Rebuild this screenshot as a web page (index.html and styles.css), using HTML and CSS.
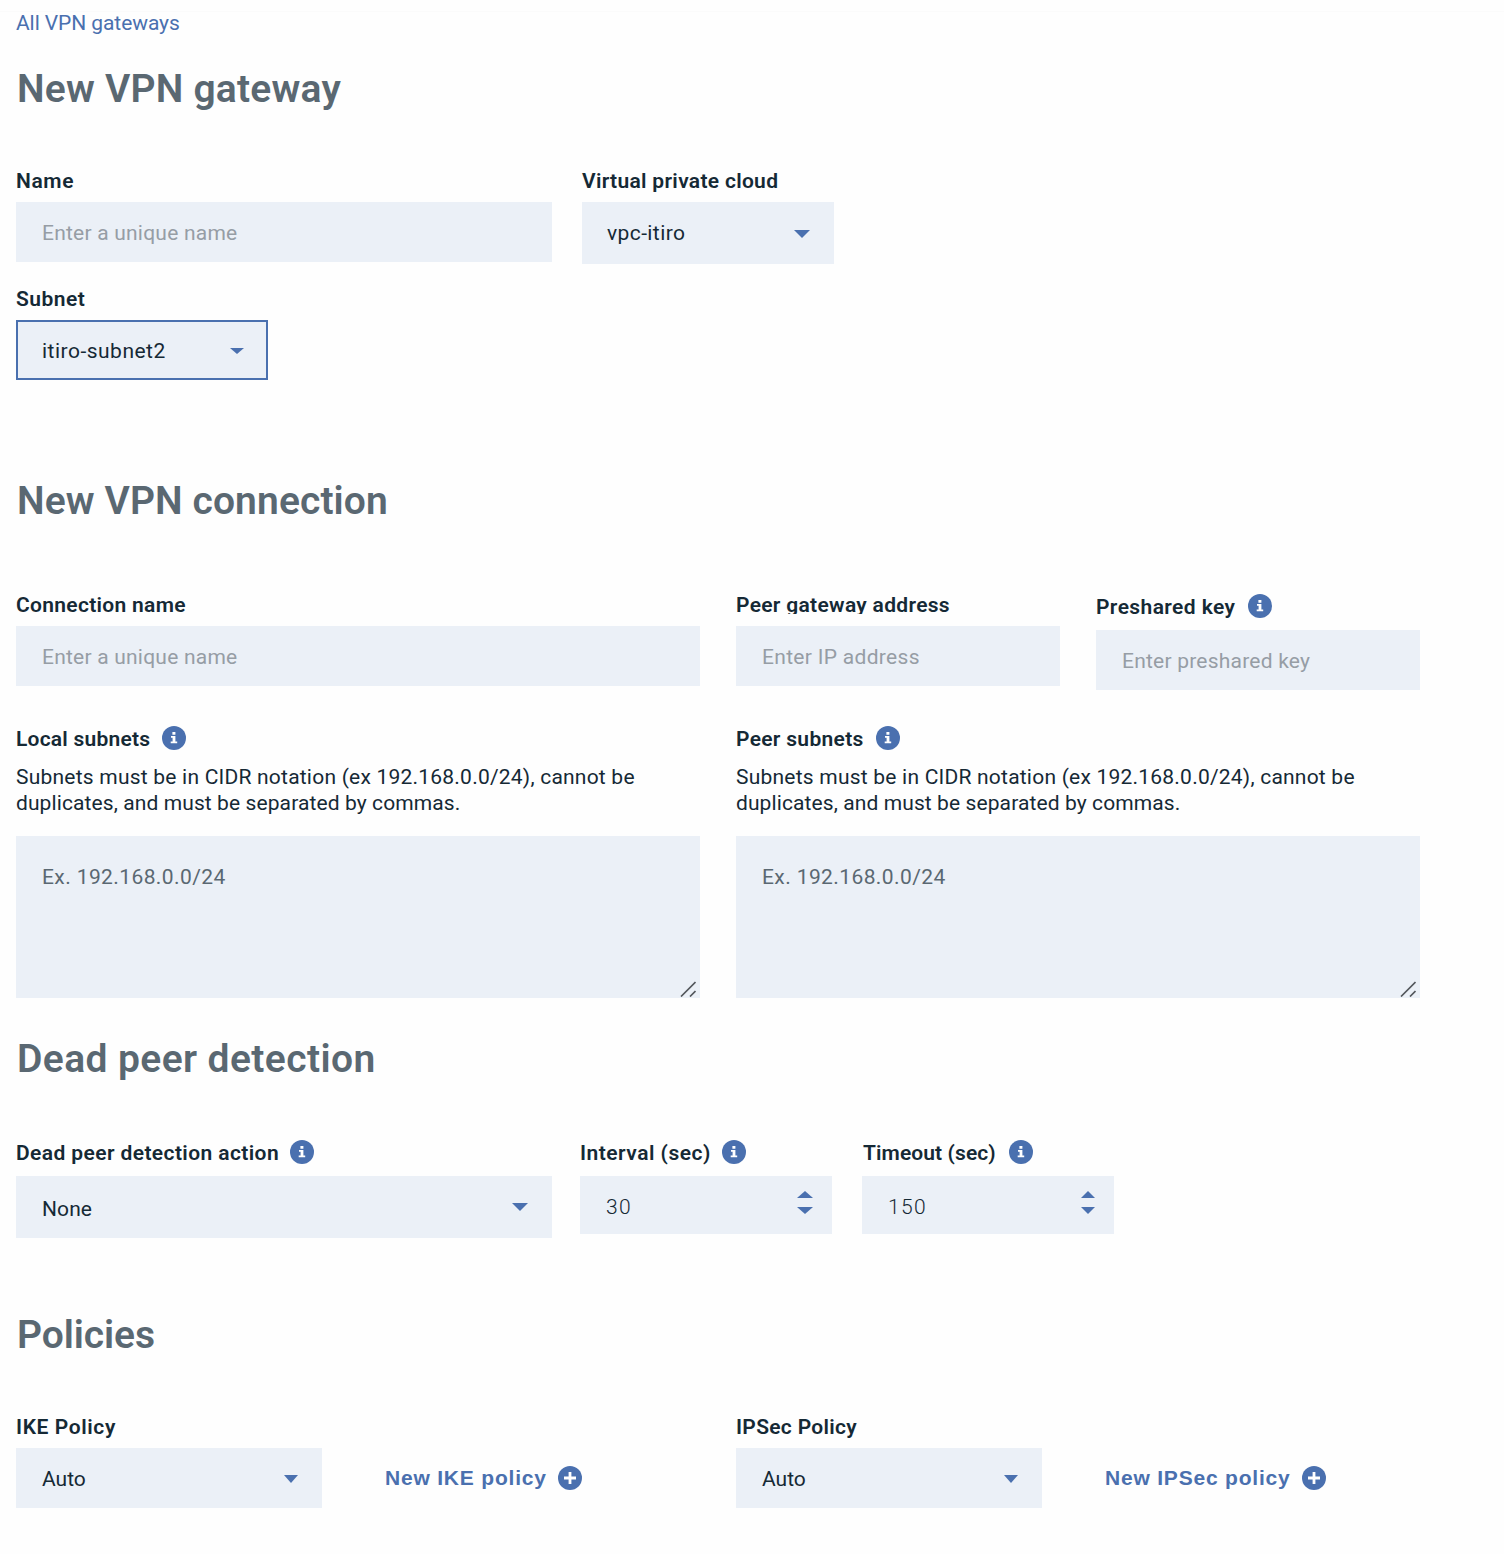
FILE: index.html
```
<!DOCTYPE html>
<html lang="en">
<head>
<meta charset="utf-8">
<title>New VPN gateway</title>
<link rel="stylesheet" href="styles.css">
</head>
<body>
<svg class="defs" aria-hidden="true">
  <symbol id="info" viewBox="0 0 24 24">
    <circle cx="12" cy="12" r="12" fill="#4a70af"/>
    <path fill="#fff" d="M10.400 6h3v2.800h-3zM9 9.900h4.400v5.500h1.800v1.900H8.700v-1.900h1.900v-3.600H9z"/>
  </symbol>
  <symbol id="plus" viewBox="0 0 24 24">
    <circle cx="12" cy="12" r="12" fill="#4a70af"/>
    <path fill="#fff" d="M10.600 6h2.800v4.600H18v2.800h-4.600V18h-2.800v-4.600H6v-2.800h4.600z"/>
  </symbol>
  <symbol id="down" viewBox="0 0 16 8" preserveAspectRatio="none"><path fill="#4a70af" d="M0 0h16L8 8z"/></symbol>
  <symbol id="up" viewBox="0 0 16 8" preserveAspectRatio="none"><path fill="#4a70af" d="M0 8h16L8 0z"/></symbol>
  <symbol id="grip" viewBox="0 0 16 16"><path fill="none" stroke="#54585d" stroke-width="1.7" d="M1 15.500L15.500 1M10 15.500l5.500-5.500"/></symbol>
</svg>
<main class="page">
  <nav class="crumb"><a class="back tr-m1" href="#">All VPN gateways</a></nav>
  <h1 class="title tr-2">New VPN gateway</h1>

  <section class="gateway">
    <div class="row">
      <div class="field w536">
        <div class="label tr-6">Name</div>
        <div class="control placeholder tr-2">Enter a unique name</div>
      </div>
      <div class="field w252">
        <div class="label tr-3">Virtual private cloud</div>
        <div class="control select tall-top"><span class="tr-4">vpc-itiro</span><svg class="caret"><use href="#down"/></svg></div>
      </div>
    </div>
    <div class="field w252">
      <div class="label tr-5">Subnet</div>
      <div class="control select focused"><span class="tr-5">itiro-subnet2</span><svg class="caret small"><use href="#down"/></svg></div>
    </div>
  </section>

  <h2 class="title tr-1">New VPN connection</h2>
  <section class="connection">
    <div class="columns">
      <div class="field">
        <div class="label tr-3">Connection name</div>
        <div class="control placeholder tr-2">Enter a unique name</div>
      </div>
      <div class="pair">
        <div class="field">
          <div class="label clipped tr-3">Peer gateway address</div>
          <div class="control placeholder tr-3">Enter IP address</div>
        </div>
        <div class="field lowered">
          <div class="label"><span class="tr-4">Preshared key</span><svg class="icon nudge"><use href="#info"/></svg></div>
          <div class="control placeholder tr-2">Enter preshared key</div>
        </div>
      </div>
    </div>
    <div class="columns subnets">
      <div class="field">
        <div class="label"><span class="tr-2">Local subnets</span><svg class="icon"><use href="#info"/></svg></div>
        <p class="help"><span class="tr-2">Subnets must be in CIDR notation (ex 192.168.0.0/24), cannot be</span><br><span class="tr-1">duplicates, and must be separated by commas.</span></p>
        <div class="area"><span class="tr-4">Ex. 192.168.0.0/24</span><svg class="grip"><use href="#grip"/></svg></div>
      </div>
      <div class="field">
        <div class="label"><span class="tr-3">Peer subnets</span><svg class="icon"><use href="#info"/></svg></div>
        <p class="help"><span class="tr-2">Subnets must be in CIDR notation (ex 192.168.0.0/24), cannot be</span><br><span class="tr-1">duplicates, and must be separated by commas.</span></p>
        <div class="area"><span class="tr-4">Ex. 192.168.0.0/24</span><svg class="grip"><use href="#grip"/></svg></div>
      </div>
    </div>
  </section>

  <h2 class="title tr-4">Dead peer detection</h2>
  <section class="detection">
    <div class="field w536">
      <div class="label"><span class="tr-4">Dead peer detection action</span><svg class="icon tight"><use href="#info"/></svg></div>
      <div class="control select tall"><span class="tr-1">None</span><svg class="caret"><use href="#down"/></svg></div>
    </div>
    <div class="field w252">
      <div class="label"><span class="tr-5">Interval (sec)</span><svg class="icon tight"><use href="#info"/></svg></div>
      <div class="control number"><span>30</span><span class="stepper"><svg><use href="#up"/></svg><svg><use href="#down"/></svg></span></div>
    </div>
    <div class="field w252 timeout">
      <div class="label"><span class="tr-1">Timeout (sec)</span><svg class="icon nudge"><use href="#info"/></svg></div>
      <div class="control number"><span>150</span><span class="stepper narrow"><svg><use href="#up"/></svg><svg><use href="#down"/></svg></span></div>
    </div>
  </section>

  <h2 class="title tr-m1">Policies</h2>
  <section class="columns policies">
    <div class="field">
      <div class="label tr-6">IKE Policy</div>
      <div class="policy">
        <div class="control select"><span>Auto</span><svg class="caret slim"><use href="#down"/></svg></div>
        <a class="add" href="#">New IKE policy<svg class="icon"><use href="#plus"/></svg></a>
      </div>
    </div>
    <div class="field">
      <div class="label tr-3">IPSec Policy</div>
      <div class="policy">
        <div class="control select"><span>Auto</span><svg class="caret slim"><use href="#down"/></svg></div>
        <a class="add" href="#">New IPSec policy<svg class="icon"><use href="#plus"/></svg></a>
      </div>
    </div>
  </section>
</main>
</body>
</html>
```
FILE: styles.css
```
* { box-sizing: border-box; }

body {
  margin: 0;
  background: #fefefe;
  color: #152935;
  font: 21px/24px Roboto, "Liberation Sans", sans-serif;
  white-space: nowrap;
}

.defs { display: none; }
svg { display: block; flex: none; }

.page { padding-left: 16px; }

.crumb {
  margin-left: -16px;
  padding-left: 16px;
  height: 64px;
  padding-top: 11px;
  background: linear-gradient(#fbfbfb, #fbfbfb) 0 11px / 100% 1px no-repeat;
}
.back { color: #4a70af; text-decoration: none; }

.title {
  margin: 0;
  height: 48px;
  padding-left: 1px;
  color: #5a6872;
  font-size: 39px;
  line-height: 51px;
  font-weight: 600;
}

/* Letter spacing steps */
.tr-m1 { letter-spacing: -0.08px; }
.tr-1 { letter-spacing: 0.1px; }
.tr-2 { letter-spacing: 0.22px; }
.tr-3 { letter-spacing: 0.31px; }
.tr-4 { letter-spacing: 0.4px; }
.tr-5 { letter-spacing: 0.49px; }
.tr-6 { letter-spacing: 0.6px; }

.w536 { width: 536px; }
.w252 { width: 252px; }

.label {
  display: flex;
  align-items: center;
  height: 24px;
  margin-bottom: 10px;
  line-height: 26px;
  font-weight: 600;
}
.label:not(.clipped) { padding-top: 1px; }
.label .icon { margin: -1px 0 0 12px; }
.label .icon.nudge { margin-left: 13px; }
.label .icon.tight { margin-left: 11px; }
.icon { width: 24px; height: 24px; }
.clipped { height: 22px; margin-bottom: 12px; overflow: hidden; align-items: flex-start; }

.control {
  display: flex;
  align-items: center;
  height: 60px;
  padding: 1px 24px 0 26px;
  background: #ebf0f7;
}
.placeholder { color: #969da5; }
.select { justify-content: space-between; }
.caret { width: 16px; height: 8px; }
.caret.small { width: 14px; height: 6px; }
.caret.slim { width: 14px; }
.tall { height: 62px; padding-top: 3px; }
.tall .caret { margin-bottom: 3px; }
.tall-top { height: 62px; padding: 0 24px 0 25px; }
.tall-top .caret { margin-top: 2px; }
.focused { border: 2px solid #4a70af; padding-right: 22px; padding-left: 24px; }

.gateway { margin: 56px 0 96px; }
.row { display: flex; gap: 30px; margin-bottom: 22px; }

.connection { margin: 68px 0 36px; }
.columns { display: grid; grid-template-columns: 684px 684px; gap: 36px; }
.pair { display: grid; grid-template-columns: 324px 324px; gap: 36px; }
.lowered { padding-top: 2px; }
.lowered .label { margin-bottom: 12px; }
.subnets { margin-top: 36px; }
.subnets .label { margin-bottom: 14px; }
.help { margin: 0 0 20px; line-height: 26px; }
.area {
  display: flex;
  justify-content: space-between;
  height: 162px;
  padding: 29px 4px 1px 26px;
  background: #ebf0f7;
  color: #5a6872;
}
.grip { width: 16px; height: 16px; align-self: flex-end; }

.detection { display: flex; gap: 28px; margin: 58px 0 72px; }
.timeout { margin-left: 2px; }
.timeout .label { padding-left: 1px; }
.detection .label { margin-bottom: 12px; }
.number {
  height: 58px;
  justify-content: space-between;
  padding: 3px 19px 0 26px;
  font-weight: 300;
  letter-spacing: 1.3px;
}
.stepper { display: grid; gap: 9px; padding-bottom: 9px; }
.stepper svg { width: 16px; height: 7px; }
.stepper.narrow svg { width: 14px; }

.policies { margin-top: 56px; }
.policy { display: flex; gap: 63px; }
.policy .control { width: 306px; }
.add {
  display: flex;
  align-items: center;
  gap: 11px;
  color: #4a70af;
  font: bold 21px/24px "Liberation Sans", Arial, sans-serif;
  letter-spacing: 0.8px;
  text-decoration: none;
}
```
